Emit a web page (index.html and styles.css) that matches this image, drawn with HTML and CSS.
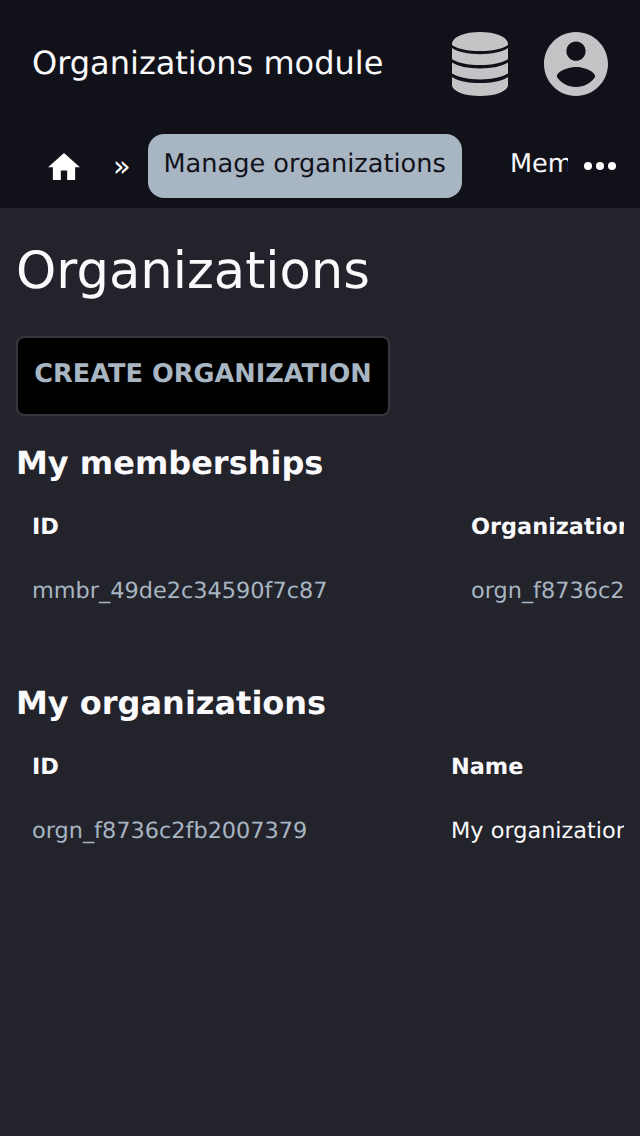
FILE: index.html
```
<!DOCTYPE html>
<html lang="en">
<head>
<meta charset="utf-8">
<title>Organizations module</title>
<link rel="stylesheet" href="styles.css">
</head>
<body>
<header class="header">
  <div class="topbar">
    <span class="brand">Organizations module</span>
    <svg class="database" viewBox="0 0 56 64" fill="currentColor"><path d="M0 11C2 4 13 0 28 0s26 4 28 11v2C50 17 40 19 28 19S6 17 0 13zM0 16C6 20 16 22.200 28 22.200s22-2.200 28-6.200v11.200C50 31 40 33 28 33S6 31 0 27.200zM0 30.600C6 34.400 16 36.500 28 36.500s22-2.100 28-5.900v11C50 45.400 40 47.400 28 47.400S6 45.400 0 41.600zM0 45C6 49 16 51 28 51s22-2 28-6v9c-2 6-13 10-28 10S2 60 0 54z"/></svg>
    <svg class="account" viewBox="2 2 20 20" fill="currentColor"><path d="M12 2C6.480 2 2 6.480 2 12s4.480 10 10 10 10-4.480 10-10S17.520 2 12 2zm0 3c1.660 0 3 1.340 3 3s-1.340 3-3 3-3-1.340-3-3 1.340-3 3-3zm0 14.200c-2.500 0-4.710-1.280-6-3.220.03-1.990 4-3.080 6-3.080 1.990 0 5.970 1.090 6 3.080-1.290 1.940-3.500 3.220-6 3.220z"/></svg>
  </div>
  <nav class="nav">
    <svg class="home" viewBox="2 3 20 17" fill="currentColor"><path d="M10 20v-6h4v6h5v-8h3L12 3 2 12h3v8z"/></svg>
    <span class="separator">»</span>
    <a class="tab active">Manage organizations</a>
    <a class="tab clipped">Memberships</a>
    <svg class="more" viewBox="0 0 32 8" fill="currentColor"><circle cx="4" cy="4" r="4"/><circle cx="16" cy="4" r="4"/><circle cx="28" cy="4" r="4"/></svg>
  </nav>
</header>
<main class="main">
  <h1 class="title">Organizations</h1>
  <button class="create">CREATE ORGANIZATION</button>
  <h2 class="subtitle">My memberships</h2>
  <div class="table memberships">
    <b>ID</b><b>Organization</b>
    <a>mmbr_49de2c34590f7c87</a><a>orgn_f8736c2fb2007379</a>
  </div>
  <h2 class="subtitle">My organizations</h2>
  <div class="table organizations">
    <b>ID</b><b>Name</b>
    <a>orgn_f8736c2fb2007379</a><span>My organization</span>
  </div>
</main>
</body>
</html>
```
FILE: styles.css
```
* { box-sizing: border-box; }
body { margin: 0; min-height: 1136px; background: #23232b; color: #fafafc; font-family: "DejaVu Sans", sans-serif; text-rendering: geometricPrecision; overflow: hidden; }
.header { height: 208px; background: #11111a; }
.topbar { height: 128px; display: flex; align-items: center; padding: 0 32px; }
.brand { font-size: 32px; line-height: 48px; margin: 0 auto 2px 0; }
.database { width: 56px; height: 64px; margin-right: 36px; color: #c4c4c6; }
.account { width: 64px; height: 64px; color: #c4c4c6; }
.nav { height: 80px; display: flex; align-items: flex-start; padding: 6px 24px 0 48px; white-space: nowrap; }
.home { width: 32px; height: 27px; margin-top: 18.500px; color: #fff; }
.separator { width: 20px; margin: 14px 15px 0 33px; font-size: 28.8px; line-height: 36px; color: #fff; }
.tab { font-size: 25.6px; line-height: 60px; height: 64px; flex: none; }
.active { width: 314px; padding-left: 15.500px; border-radius: 16px; background: #a8b5c2; color: #11111a; }
.clipped { width: 58px; margin-left: 48px; overflow: hidden; }
.more { width: 32px; height: 8px; margin: 28px 0 0 16px; color: #fff; }
.main { padding: 0 16px; }
.title { margin: 0; padding-top: 25px; font-size: 51.2px; line-height: 76px; font-weight: 400; }
.create { display: block; width: 374px; height: 80px; margin: 27px 0 0; padding: 0 0 4px; border: 2px solid #35383f; border-radius: 8px; background: #000; color: #a8b5c2; font: bold 25.6px "DejaVu Sans", sans-serif; text-rendering: inherit; white-space: nowrap; }
.subtitle { margin: 0; padding-top: 23px; font-size: 32px; line-height: 48px; font-weight: 700; }
.table { display: grid; grid-template-rows: 64px 64px; height: 169px; padding: 8px 0 0 16px; line-height: 64px; font-size: 22.4px; white-space: nowrap; overflow: hidden; }
.table a { color: #a8b5c2; }
.memberships { grid-template-columns: 439px 400px; }
.organizations { grid-template-columns: 419px 400px; }
```
